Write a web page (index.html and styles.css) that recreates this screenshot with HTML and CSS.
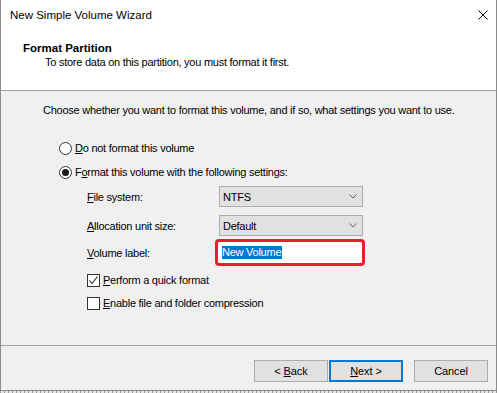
FILE: index.html
```html
<!DOCTYPE html>
<html>
<head>
<meta charset="utf-8">
<link rel="stylesheet" href="styles.css">
</head>
<body>
<div class="window">
  <div class="top">
    <div class="titlebar">
      <span class="title">New Simple Volume Wizard</span>
      <svg class="close" width="10" height="10" viewBox="0 0 10 10"><path d="M0.5 0.5L9.5 9.5M9.5 0.5L0.5 9.5" stroke="#000" stroke-width="1" fill="none"/></svg>
    </div>
    <div class="header">
      <div class="h-title">Format Partition</div>
      <div class="h-sub">To store data on this partition, you must format it first.</div>
    </div>
  </div>
  <div class="content">
    <div class="intro">Choose whether you want to format this volume, and if so, what settings you want to use.</div>
    <div class="radios">
      <div class="opt"><span class="radio"></span><span><u>D</u>o not format this volume</span></div>
      <div class="opt"><span class="radio checked"></span><span>F<u>o</u>rmat this volume with the following settings:</span></div>
    </div>
    <div class="settings">
      <div class="row r-fs">
        <span class="lbl"><u>F</u>ile system:</span>
        <div class="combo"><span>NTFS</span><svg width="8" height="5" viewBox="0 0 8 5"><path d="M0.5 0.5L4 4L7.5 0.5" stroke="#606060" fill="none"/></svg></div>
      </div>
      <div class="row r-al">
        <span class="lbl"><u>A</u>llocation unit size:</span>
        <div class="combo"><span>Default</span><svg width="8" height="5" viewBox="0 0 8 5"><path d="M0.5 0.5L4 4L7.5 0.5" stroke="#606060" fill="none"/></svg></div>
      </div>
      <div class="row r-vl">
        <span class="lbl"><u>V</u>olume label:</span>
        <div class="textbox"><span class="sel">New Volume</span></div>
      </div>
      <div class="check c1"><span class="box"><svg width="11" height="11" viewBox="0 0 11 11"><path d="M1.5 5.5L4 8.5L9.5 1.5" stroke="#222" stroke-width="1.1" fill="none"/></svg></span><span><u>P</u>erform a quick format</span></div>
      <div class="check c2"><span class="box"></span><span><u>E</u>nable file and folder compression</span></div>
    </div>
  </div>
  <div class="footer">
    <button class="btn">&lt; <u>B</u>ack</button>
    <button class="btn next"><u>N</u>ext &gt;</button>
    <button class="btn cancel">Cancel</button>
  </div>
</div>
<div class="desk"></div>
</body>
</html>
```
FILE: styles.css
```css
html, body {
  margin: 0;
  padding: 0;
  background: #ffffff;
}
body {
  font-family: "Liberation Sans", Arial, sans-serif;
  font-size: 11px;
  letter-spacing: -0.25px;
  color: #000;
  width: 499px;
  height: 393px;
  overflow: hidden;
}
.window {
  width: 497px;
  height: 391px;
  box-sizing: border-box;
  border: 1px solid #8c8c8c;
  border-top: none;
  background: #f0f0f0;
  display: flex;
  flex-direction: column;
}
.top {
  background: #ffffff;
  height: 91px;
  box-sizing: border-box;
  border-bottom: 1px solid #a0a0a0;
}
.titlebar {
  height: 30px;
  box-sizing: border-box;
  padding: 7px 0 0 9px;
  display: flex;
  justify-content: space-between;
  line-height: 16px;
  font-size: 11.5px;
  letter-spacing: 0;
}
.close {
  margin: 3px 8px 0 0;
}
.header {
  padding: 10px 0 0 22px;
}
.h-title {
  font-weight: bold;
  font-size: 11.5px;
  letter-spacing: 0;
  line-height: 16px;
}
.h-sub {
  padding-left: 22px;
  line-height: 14px;
  margin-top: -1px;
}
.content {
  height: 255px;
  box-sizing: border-box;
  padding: 11px 0 0 42px;
  border-bottom: 1px solid #a0a0a0;
  line-height: 16px;
}
.intro {
  white-space: nowrap;
}
.radios {
  margin: 22px 0 0 16px;
  display: flex;
  flex-direction: column;
  gap: 8px;
}
.opt, .check {
  display: flex;
  align-items: center;
  height: 16px;
}
.radio {
  width: 13px;
  height: 13px;
  box-sizing: border-box;
  border: 1px solid #333;
  border-radius: 50%;
  background: #fff;
  margin-right: 3px;
  display: flex;
  align-items: center;
  justify-content: center;
}
.radio.checked::after {
  content: "";
  width: 7px;
  height: 7px;
  border-radius: 50%;
  background: #1a1a1a;
}
.settings {
  margin: 6px 0 0 44px;
}
.row {
  display: flex;
  align-items: center;
}
.lbl {
  width: 132px;
  flex: none;
}
.r-fs, .r-al {
  height: 21px;
}
.r-al {
  margin-top: 8px;
}
.r-vl {
  height: 27px;
  margin-top: 3px;
}
.combo {
  width: 144px;
  height: 21px;
  box-sizing: border-box;
  border: 1px solid #adadad;
  background: #e1e1e1;
  display: flex;
  align-items: center;
  justify-content: space-between;
  padding: 0 5px 0 3px;
}
.textbox {
  width: 150px;
  height: 27px;
  box-sizing: border-box;
  margin-left: -4px;
  border: 3px solid #e3202b;
  border-radius: 4px;
  background: #fff;
  display: flex;
  align-items: center;
  padding-left: 4px;
}
.sel {
  background: #0078d7;
  color: #fff;
  line-height: 13px;
  padding: 0 1px 0 0;
}
.c1 {
  margin-top: 6px;
}
.c2 {
  margin-top: 7px;
}
.box {
  width: 13px;
  height: 13px;
  box-sizing: border-box;
  border: 1px solid #333;
  background: #fff;
  margin-right: 3px;
  display: flex;
  align-items: center;
  justify-content: center;
}
.box svg {
  display: block;
}
.footer {
  flex: 1;
  display: flex;
  justify-content: flex-end;
  align-items: flex-start;
  padding: 14px 8px 0 0;
}
.btn {
  width: 74px;
  height: 22px;
  box-sizing: border-box;
  border: 1px solid #adadad;
  background: #e1e1e1;
  font-family: "Liberation Sans", Arial, sans-serif;
  font-size: 11px;
  letter-spacing: -0.1px;
  color: #000;
  padding: 0;
  margin: 0;
}
.next {
  margin-left: 1px;
  border: 2px solid #0078d7;
}
.cancel {
  margin-left: 11px;
}
.desk {
  height: 2px;
  width: 497px;
  background: repeating-linear-gradient(90deg, #9a9a9a 0 1px, #e6e6e6 1px 4px);
}
```
